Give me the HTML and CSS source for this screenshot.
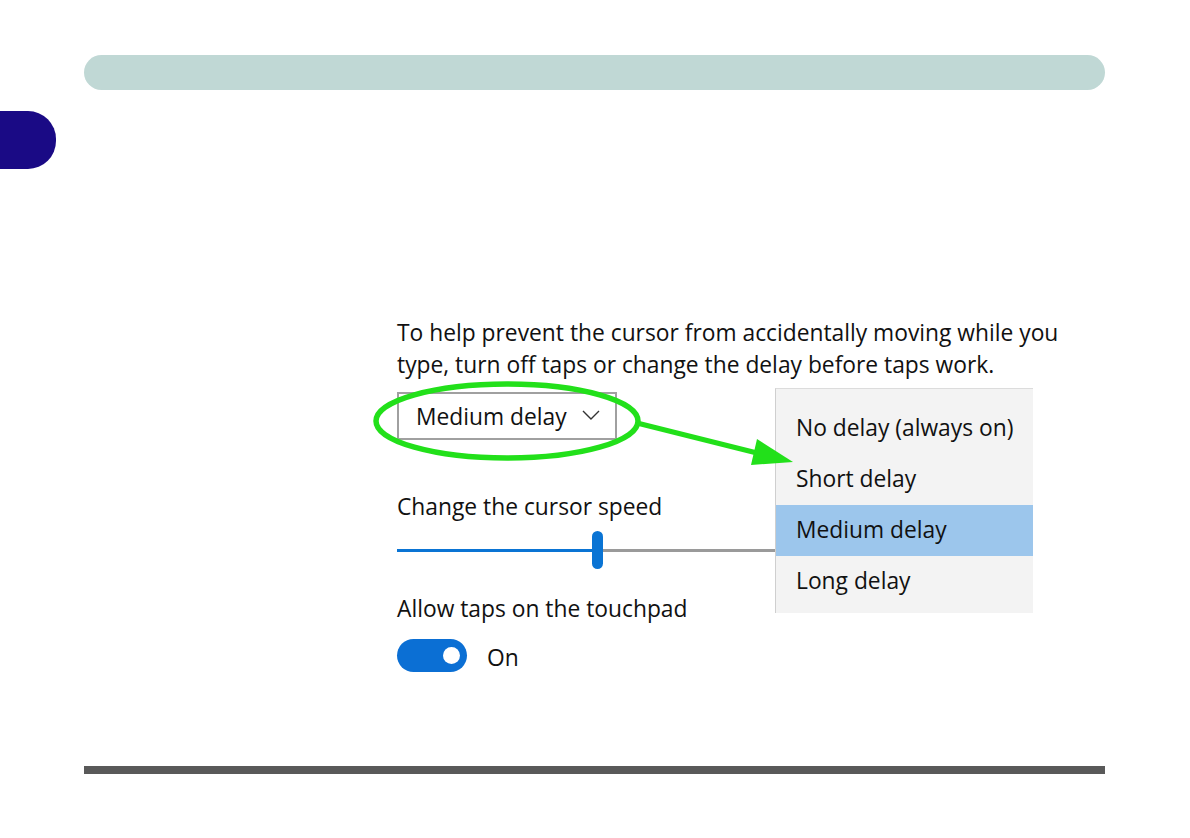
FILE: index.html
```html
<!doctype html>
<html lang="en">
<head>
    <meta charset="utf-8">
    <title>Touchpad delay</title>
    <link rel="stylesheet" href="styles.css">
</head>
<body>
    <div class="page">
        <div class="header-bar"></div>
        <div class="chapter-tab"></div>

        <div class="shot">
            <p class="intro">To help prevent the cursor from accidentally moving while you<br>type, turn off taps or change the delay before taps work.</p>

            <div class="dropdown">
                <span>Medium delay</span>
                <svg class="chevron" width="18" height="10" viewBox="0 0 18 10">
                    <polyline points="1,1 9,9 17,1" fill="none" stroke="#333" stroke-width="1.4"/>
                </svg>
            </div>

            <p class="label speed-label">Change the cursor speed</p>
            <div class="slider">
                <div class="track-fill"></div>
                <div class="thumb"></div>
                <div class="track-rest"></div>
            </div>

            <p class="label taps-label">Allow taps on the touchpad</p>
            <div class="toggle-row">
                <div class="toggle"><div class="knob"></div></div>
                <span class="toggle-text">On</span>
            </div>

            <ul class="menu">
                <li>No delay (always on)</li>
                <li>Short delay</li>
                <li class="selected">Medium delay</li>
                <li>Long delay</li>
            </ul>

            <svg class="callout" width="480" height="140" viewBox="-40 40 480 140">
                <ellipse cx="110" cy="106" rx="131" ry="37" fill="none" stroke="#22e01a" stroke-width="5.5"/>
                <line x1="240" y1="108" x2="360" y2="138" stroke="#22e01a" stroke-width="5"/>
                <polygon points="396,147 360,124 354,150" fill="#22e01a"/>
            </svg>
        </div>

        <div class="footer-rule"></div>
    </div>
</body>
</html>
```

FILE: styles.css
```css
body {
    margin: 0;
    background-color: #ffffff;
    font-family: "Open Sans", "Noto Sans", sans-serif;
    color: #111111;
}
.page {
    width: 1190px;
    height: 838px;
    display: flex;
    flex-direction: column;
}
.header-bar {
    margin: 55px 85px 0 84px;
    height: 35px;
    background-color: #c0d8d5;
    border-radius: 18px;
}
.chapter-tab {
    width: 56px;
    height: 58px;
    margin-top: 21px;
    background-color: #1a0a85;
    border-radius: 0 28px 28px 0;
}
.shot {
    position: relative;
    margin: 148px 0 0 397px;
    width: 680px;
}
.intro, .label {
    margin: 0;
    font-size: 22.8px;
    line-height: 32px;
}
.dropdown {
    margin-top: 11px;
    border: 2px solid #a0a0a0;
    display: flex;
    align-items: center;
    justify-content: space-between;
    padding: 0 15px 0 17px;
    box-sizing: border-box;
    width: 220px;
    height: 48px;
    font-size: 22.8px;
}
.chevron {
    margin-top: -2px;
}
.speed-label {
    margin-top: 51px;
}
.slider {
    margin-top: 8px;
    height: 38px;
    width: 440px;
    display: flex;
    align-items: center;
}
.track-fill {
    width: 195px;
    height: 3px;
    background-color: #0a74d4;
}
.thumb {
    width: 11px;
    height: 38px;
    border-radius: 6px;
    background-color: #0a74d4;
}
.track-rest {
    flex: 1;
    height: 3px;
    background-color: #9a9a9a;
}
.taps-label {
    margin-top: 24px;
}
.toggle-row {
    margin-top: 13px;
    display: flex;
    align-items: center;
    gap: 20px;
    font-size: 22.8px;
}
.toggle-text {
    padding-top: 4px;
}
.toggle {
    width: 70px;
    height: 33px;
    border-radius: 17px;
    background-color: #0b6fd4;
    display: flex;
    align-items: center;
    justify-content: flex-end;
    padding-right: 7px;
    box-sizing: border-box;
}
.knob {
    width: 17px;
    height: 17px;
    border-radius: 50%;
    background-color: #ffffff;
}
.menu {
    position: absolute;
    left: 378px;
    top: 71px;
    width: 258px;
    height: 225px;
    margin: 0;
    padding: 14px 0 0;
    box-sizing: border-box;
    list-style: none;
    background-color: #f3f3f3;
    border-left: 1px solid #cfcfcf;
    border-top: 1px solid #dcdcdc;
}
.menu li {
    height: 51px;
    line-height: 50px;
    padding-left: 20px;
    font-size: 22.8px;
}
.menu li.selected {
    background-color: #9cc6ec;
}
.callout {
    position: absolute;
    left: -40px;
    top: 38px;
}
.footer-rule {
    margin: auto 85px 64px 84px;
    height: 8px;
    background-color: #595959;
}
```
